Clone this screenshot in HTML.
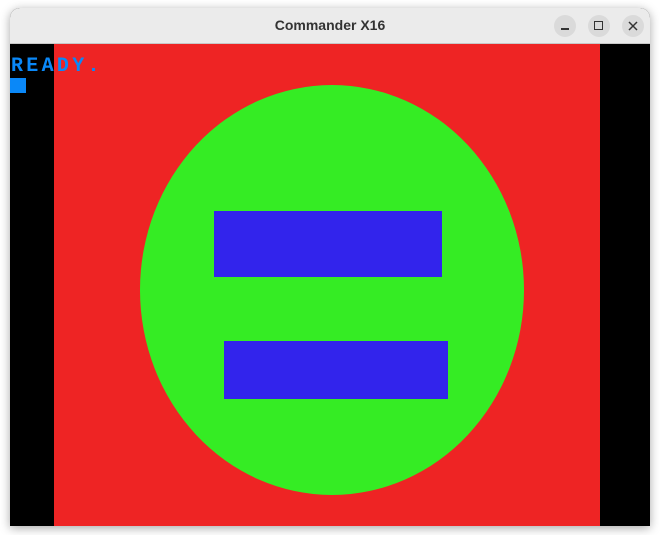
<!DOCTYPE html>
<html><head><style>
html,body{margin:0;padding:0;width:660px;height:535px;overflow:hidden;background:#fff;}
.win{position:absolute;left:10px;top:8px;width:640px;height:518px;border-radius:10px 10px 0 0;overflow:hidden;box-shadow:0 2px 10px rgba(0,0,0,.35);background:#000;}
.tb{position:absolute;left:0;top:0;width:640px;height:36px;background:#ebebeb;border-bottom:1px solid #c8c8c8;box-sizing:border-box;}
.title{position:absolute;left:0;width:640px;top:9px;text-align:center;font:bold 14px "Liberation Sans",sans-serif;color:#333;}
.btn{position:absolute;top:7px;width:22px;height:22px;border-radius:50%;background:#dadada;}
.scr{position:absolute;left:0;top:36px;width:640px;height:482px;background:#000;}
</style></head><body>
<div class="win">
<div class="tb"><div class="title">Commander X16</div>
<div class="btn" style="left:544px"><div style="position:absolute;left:7px;top:13px;width:8px;height:1.5px;background:#333"></div></div>
<div class="btn" style="left:578px"><div style="position:absolute;left:6px;top:6px;width:7px;height:7px;border:1.5px solid #333"></div></div>
<div class="btn" style="left:612px"><svg width="22" height="22" style="position:absolute;left:0;top:0"><path d="M7 7L15 15M15 7L7 15" stroke="#333" stroke-width="1.5"/></svg></div>
</div>
<div class="scr">
<svg width="640" height="482" style="position:absolute;left:0;top:0">
<rect x="44" y="0" width="546" height="482" fill="#ee2424"/>
<ellipse cx="322" cy="246" rx="192" ry="205" fill="#35ec24"/>
<rect x="204" y="167" width="228" height="66" fill="#3224ec"/>
<rect x="214" y="297" width="224" height="58" fill="#3224ec"/>
<rect x="0" y="34" width="16" height="15" fill="#0a88f8"/>
</svg>
<div style="position:absolute;left:1px;top:13px;font:bold 20px 'Liberation Mono',monospace;color:#0a88f8;letter-spacing:3.3px;line-height:20px;">READY.</div>
</div>
</div>
</body></html>
